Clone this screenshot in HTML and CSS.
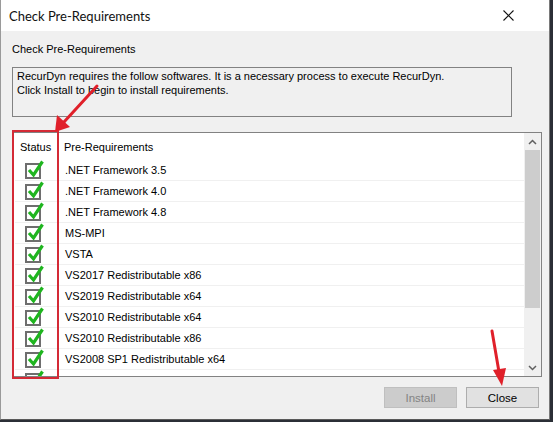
FILE: index.html
```html
<!DOCTYPE html>
<html>
<head>
<meta charset="utf-8">
<link rel="stylesheet" href="styles.css">
</head>
<body>
<div class="window">
  <div class="titlebar">
    <span class="title">Check Pre-Requirements</span>
    <svg class="close-x" width="11" height="11" viewBox="0 0 11 11"><path d="M0.5 0.5 L10.5 10.5 M10.5 0.5 L0.5 10.5" stroke="#111" stroke-width="1.1"/></svg>
  </div>
  <div class="body">
    <div class="label">Check Pre-Requirements</div>
    <div class="infobox">RecurDyn requires the follow softwares. It is a necessary process to execute RecurDyn.<br>Click Install to begin to install requirements.</div>
    <div class="list">
      <div class="list-inner">
        <div class="row head"><div class="c1">Status</div><div class="c2">Pre-Requirements</div></div>
        <div class="rows" id="rows"></div>
      </div>
      <div class="scrollbar">
        <div class="arrow"><svg width="9" height="6" viewBox="0 0 9 6"><path d="M1 5 L4.5 1.5 L8 5" fill="none" stroke="#606060" stroke-width="1.5"/></svg></div>
        <div class="track"><div class="thumb"></div></div>
        <div class="arrow"><svg width="9" height="6" viewBox="0 0 9 6"><path d="M1 1 L4.5 4.5 L8 1" fill="none" stroke="#606060" stroke-width="1.5"/></svg></div>
      </div>
    </div>
    <div class="buttons">
      <div class="btn disabled">Install</div>
      <div class="btn">Close</div>
    </div>
  </div>
  <div class="redbox"></div>
  <svg class="annot" width="553" height="422" viewBox="0 0 553 422">
    <line x1="97" y1="86" x2="64" y2="122" stroke="#e0202a" stroke-width="3" stroke-linecap="round"/>
    <polygon points="55,132 57,115 70,127" fill="#e0202a"/>
    <line x1="492" y1="331" x2="499" y2="372" stroke="#e0202a" stroke-width="3" stroke-linecap="round"/>
    <polygon points="502,386 493,370 506,368" fill="#e0202a"/>
  </svg>
</div>
<script src="app.js"></script>
</body>
</html>
```
FILE: app.js
```js
var items = [".NET Framework 3.5", ".NET Framework 4.0", ".NET Framework 4.8", "MS-MPI", "VSTA",
  "VS2017 Redistributable x86", "VS2019 Redistributable x64", "VS2010 Redistributable x64",
  "VS2010 Redistributable x86", "VS2008 SP1 Redistributable x64", ""];
var check = '<svg width="20" height="20" viewBox="0 0 20 20"><rect x="1" y="5" width="14" height="14" fill="#fff" stroke="#6e6e6e" stroke-width="2"/><path d="M4 11 L8.5 16 L17.5 2.5" fill="none" stroke="#1fb51f" stroke-width="3.2" stroke-linejoin="miter"/></svg>';
var html = "";
items.forEach(function (t) {
  html += '<div class="row"><div class="c1">' + check + '</div><div class="c2">' + t + '</div></div>';
});
document.getElementById("rows").innerHTML = html;
```
FILE: styles.css
```css
html, body { margin: 0; padding: 0; }
body { width: 553px; height: 422px; background: #2b2f36; overflow: hidden; font-family: "Liberation Sans", Arial, sans-serif; font-size: 11px; color: #000; }
.window { position: relative; width: 550px; height: 420px; background: #f0f0f0; border-left: 1px solid #9a9a9a; box-sizing: border-box; border-right: 1px solid #7a7a7a; border-bottom: 1px solid #5a5a5a; }
.titlebar { height: 31px; background: #fff; display: flex; align-items: center; justify-content: space-between; padding: 0 35px 0 8px; }
.title { font-family: "Lato", "Noto Sans", sans-serif; font-size: 13px; color: #111; }
.close-x { display: block; }
.body { padding: 0 8px 0 11px; }
.label { height: 36px; line-height: 36px; }
.infobox { width: 500px; height: 50px; box-sizing: border-box; border: 1px solid #828282; padding: 1px 4px; line-height: 14px; }
.list { margin-top: 15px; width: 530px; height: 245px; box-sizing: border-box; border: 1px solid #828282; background: #fff; display: flex; overflow: hidden; }
.list-inner { flex: 1; overflow: hidden; padding-left: 2px; }
.row { display: flex; height: 21px; align-items: center; border-bottom: 1px solid #f0f0f0; box-sizing: border-box; }
.row.head { height: 27px; border-bottom: none; }
.c1 { width: 42px; display: flex; justify-content: center; padding-left: 2px; box-sizing: border-box; }
.row.head .c1 { justify-content: flex-start; padding-left: 5px; }
.c1 svg { display: block; margin-top: -3px; margin-left: -4px; }
.c2 { padding-left: 7px; border-left: 1px solid #f0f0f0; height: 100%; display: flex; align-items: center; flex: 1; }
.row.head .c2 { border-left: 1px solid #e5e5e5; padding-left: 6px; }
.scrollbar { width: 17px; background: #f0f0f0; display: flex; flex-direction: column; }
.arrow { height: 17px; display: flex; align-items: center; justify-content: center; }
.track { flex: 1; }
.thumb { margin: 0 1px; height: 158px; background: #cdcdcd; }
.buttons { display: flex; justify-content: flex-end; gap: 9px; padding-top: 10px; padding-right: 2px; }
.btn { width: 73px; height: 21px; box-sizing: border-box; border: 1px solid #adadad; background: #e1e1e1; display: flex; align-items: center; justify-content: center; font-size: 11.5px; }
.btn.disabled { border-color: #bfbfbf; background: #cccccc; color: #838383; }
.redbox { position: absolute; left: 11px; top: 130px; width: 47px; height: 249px; box-sizing: border-box; border: 2px solid #d42a36; }
.annot { position: absolute; left: -1px; top: 0; pointer-events: none; }
```
